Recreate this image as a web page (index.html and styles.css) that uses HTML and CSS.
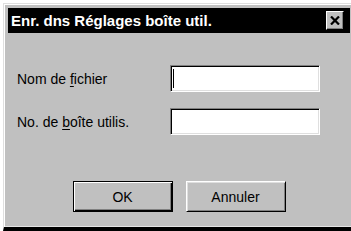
FILE: index.html
```html
<!DOCTYPE html>
<html lang="fr">
<head>
    <meta charset="UTF-8">
    <title>Enr. dns Réglages boîte util.</title>
    <link rel="stylesheet" href="styles.css">
</head>
<body>
    <div class="dialog">
        <div class="title-bar">
            <span class="title">Enr. dns Réglages boîte util.</span>
            <button class="close-btn" aria-label="Fermer">
                <svg width="10" height="9" viewBox="0 0 10 9">
                    <path d="M1 0.5 L9 8.5 M9 0.5 L1 8.5" stroke="#000" stroke-width="2.2" fill="none"/>
                </svg>
            </button>
        </div>
        <div class="dialog-body">
            <div class="field">
                <label>Nom de <u>f</u>ichier</label>
                <div class="textbox"><span class="caret"></span></div>
            </div>
            <div class="field">
                <label>No. de <u>b</u>oîte utilis.</label>
                <div class="textbox"></div>
            </div>
            <div class="buttons">
                <button class="btn btn-default">OK</button>
                <button class="btn">Annuler</button>
            </div>
        </div>
    </div>
</body>
</html>
```

FILE: styles.css
```css
body {
    margin: 0;
    background-color: #ffffff;
    font-family: "Liberation Sans", Arial, sans-serif;
    overflow: hidden;
}
.dialog {
    box-sizing: border-box;
    width: 348px;
    height: 228px;
    margin: 3px 0 0 3px;
    padding: 4px 1px 0 4px;
    background-color: #c0c0c0;
    border-top: 1px solid #dfdfdf;
    border-left: 1px solid #dfdfdf;
    border-bottom: 4px solid #000000;
    box-shadow: inset 1px 1px #ffffff, inset 0 -1px #e4e4e4;
}
.title-bar {
    display: flex;
    align-items: center;
    justify-content: space-between;
    height: 25px;
    background-color: #000000;
}
.title {
    padding-left: 3px;
    color: #ffffff;
    font-weight: bold;
    font-size: 15px;
    line-height: 25px;
    white-space: nowrap;
}
.close-btn {
    display: flex;
    align-items: center;
    justify-content: center;
    box-sizing: border-box;
    width: 18px;
    height: 19px;
    margin-right: 6px;
    padding: 0;
    background-color: #c0c0c0;
    border: 1px solid;
    border-color: #ffffff #000000 #000000 #ffffff;
    box-shadow: inset -1px -1px #808080;
}
.dialog-body {
    padding: 32px 0 0 9px;
}
.field {
    display: flex;
    align-items: center;
    margin-bottom: 16px;
}
.field label {
    width: 153px;
    font-size: 14px;
    color: #000000;
}
.field u {
    text-underline-offset: 2px;
}
.textbox {
    display: flex;
    align-items: center;
    box-sizing: border-box;
    width: 150px;
    height: 27px;
    padding-left: 2px;
    background-color: #ffffff;
    border: 1px solid;
    border-color: #808080 #ffffff #ffffff #808080;
    box-shadow: inset 1px 1px #000000, inset -1px -1px #dfdfdf;
}
.caret {
    width: 1px;
    height: 19px;
    background-color: #000000;
}
.buttons {
    display: flex;
    justify-content: center;
    gap: 13px;
    margin-top: 46px;
    padding-right: 9px;
}
.btn {
    box-sizing: border-box;
    width: 100px;
    height: 31px;
    padding: 0;
    background-color: #c0c0c0;
    font-family: "Liberation Sans", Arial, sans-serif;
    font-size: 14px;
    color: #000000;
    border: 1px solid;
    border-color: #ffffff #000000 #000000 #ffffff;
    box-shadow: inset 1px 1px #dfdfdf, inset -1px -1px #808080;
}
.btn-default {
    border-color: #000000;
    box-shadow: inset 1px 1px #ffffff, inset -1px -1px #000000, inset -2px -2px #808080;
}
```
